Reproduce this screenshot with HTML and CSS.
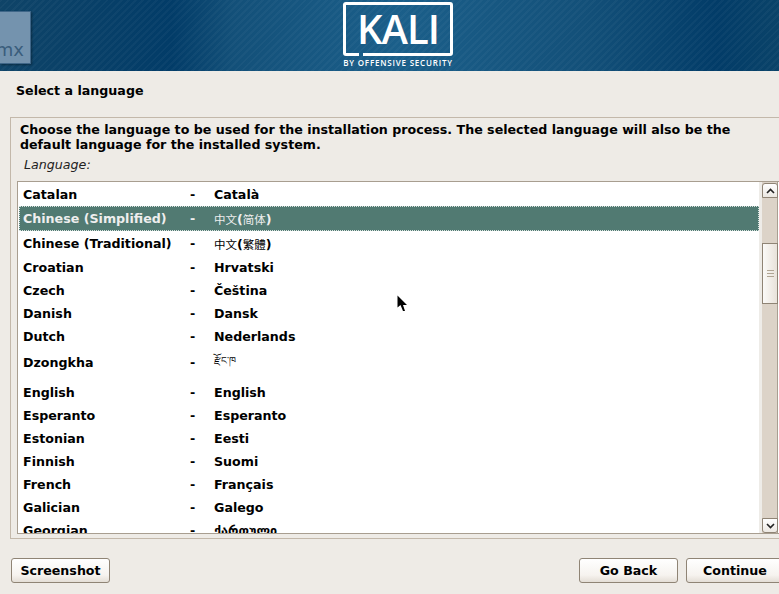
FILE: index.html
```html
<!DOCTYPE html>
<html lang="en">
<head>
<meta charset="utf-8">
<title>Select a language</title>
<link rel="stylesheet" href="styles.css">
</head>
<body>
<header class="banner">
  <div class="tile"><span>mx</span></div>
  <div class="logo">
    <div class="logo-box">KALI</div>
    <div class="logo-sub">BY OFFENSIVE SECURITY</div>
  </div>
</header>
<h1 class="title">Select a language</h1>
<main class="frame">
  <p class="prompt">Choose the language to be used for the installation process. The selected language will also be the default language for the installed system.</p>
  <div class="label">Language:</div>
  <div class="listbox">
    <div class="list">
      <div class="row r-catalan"><span class="c1">Catalan</span><span class="c2">-</span><span class="c3">Català</span></div>
      <div class="row r-sel"><span class="c1">Chinese (Simplified)</span><span class="c2">-</span><span class="c3" lang="zh-CN"><span class="han">中文</span>(<span class="han">简体</span>)</span></div>
      <div class="row r-trad"><span class="c1">Chinese (Traditional)</span><span class="c2">-</span><span class="c3" lang="zh-TW"><span class="han">中文</span>(<span class="han">繁體</span>)</span></div>
      <div class="row"><span class="c1">Croatian</span><span class="c2">-</span><span class="c3">Hrvatski</span></div>
      <div class="row"><span class="c1">Czech</span><span class="c2">-</span><span class="c3">Čeština</span></div>
      <div class="row"><span class="c1">Danish</span><span class="c2">-</span><span class="c3">Dansk</span></div>
      <div class="row"><span class="c1">Dutch</span><span class="c2">-</span><span class="c3">Nederlands</span></div>
      <div class="row r-dz"><span class="c1">Dzongkha</span><span class="c2">-</span><span class="c3 tib">རྫོང་ཁ</span></div>
      <div class="row"><span class="c1">English</span><span class="c2">-</span><span class="c3">English</span></div>
      <div class="row"><span class="c1">Esperanto</span><span class="c2">-</span><span class="c3">Esperanto</span></div>
      <div class="row"><span class="c1">Estonian</span><span class="c2">-</span><span class="c3">Eesti</span></div>
      <div class="row"><span class="c1">Finnish</span><span class="c2">-</span><span class="c3">Suomi</span></div>
      <div class="row"><span class="c1">French</span><span class="c2">-</span><span class="c3">Français</span></div>
      <div class="row"><span class="c1">Galician</span><span class="c2">-</span><span class="c3">Galego</span></div>
      <div class="row"><span class="c1">Georgian</span><span class="c2">-</span><span class="c3">ქართული</span></div>
    </div>
    <div class="scrollbar">
      <div class="arrow">
        <svg width="9" height="6" viewBox="0 0 9 6"><path d="M1 5 4.5 1.5 8 5" fill="none" stroke="#222" stroke-width="1.6"/></svg>
      </div>
      <div class="track">
        <div class="gap-top"></div>
        <div class="thumb"><i></i><i></i><i></i></div>
      </div>
      <div class="arrow arrow-down">
        <svg width="9" height="6" viewBox="0 0 9 6"><path d="M1 1 4.5 4.5 8 1" fill="none" stroke="#222" stroke-width="1.6"/></svg>
      </div>
    </div>
  </div>
</main>
<footer class="actions">
  <button class="btn btn-shot">Screenshot</button>
  <span class="spacer"></span>
  <button class="btn btn-back">Go Back</button>
  <button class="btn btn-next">Continue</button>
</footer>
<svg class="cursor" width="12" height="18" viewBox="0 0 12 18"><path d="M0.5 0.5V12.5L3.5 10 6 16H8L6 10H10Z" fill="#000"/></svg>
</body>
</html>
```
FILE: styles.css
```css
* { box-sizing: border-box; }
html, body { margin: 0; height: 100%; }
body {
  width: 779px;
  height: 594px;
  overflow: hidden;
  position: relative;
  background: #eeebe6;
  color: #000;
  font-family: "DejaVu Sans", sans-serif;
  font-size: 12.65px;
  font-weight: 700;
  display: flex;
  flex-direction: column;
}
.banner {
  height: 71px;
  flex: none;
  position: relative;
  display: flex;
  justify-content: center;
  padding-left: 17px;
  background:
    repeating-linear-gradient(135deg, rgba(255,255,255,.03) 0 2px, rgba(255,255,255,0) 2px 5px),
    linear-gradient(90deg, #0f4468 0, #023c68 22%, #135079 30%, #1b5f8a 51%, #135079 75%, #023c68 92%, #0a4369 100%);
}
.tile {
  position: absolute;
  left: 0;
  top: 11px;
  width: 31px;
  height: 53px;
  background: #7493ae;
  border: 1px solid #3f6688;
  border-left: 0;
  box-shadow: 1px 1px 2px rgba(0,0,0,.35);
  display: flex;
  align-items: flex-end;
  font-weight: 400;
  font-size: 18px;
  color: #3a5d7c;
  padding-bottom: 3px;
  justify-content: flex-end;
  padding-right: 6px;
}
.logo {
  width: 110px;
  margin-top: 2px;
  display: flex;
  flex-direction: column;
  align-items: center;
  color: #fff;
}
.logo-box {
  width: 110px;
  height: 54px;
  border: 3px solid #fff;
  border-radius: 3px;
  font-family: "Open Sans", sans-serif;
  font-weight: 600;
  font-size: 40px;
  line-height: 48px;
  text-align: center;
  letter-spacing: -1px;
  position: relative;
}
.logo-box::after {
  content: "";
  position: absolute;
  left: 13px;
  bottom: -3px;
  width: 4px;
  height: 3px;
  background: #1b5f8a;
}
.logo-sub {
  font-family: "Open Sans", sans-serif;
  font-weight: 600;
  font-size: 8px;
  line-height: 8px;
  letter-spacing: 0.8px;
  white-space: nowrap;
  margin-top: 3px;
}
.title {
  margin: 0;
  font-size: 12.65px;
  font-weight: 700;
  line-height: 16px;
  padding: 12px 0 0 16px;
  height: 46px;
  flex: none;
}
.frame {
  flex: none;
  height: 422px;
  margin-left: 10px;
  margin-right: -2px;
  border: 1px solid #c3b8aa;
  border-right: 0;
  padding: 4px 0 4px 6px;
  display: flex;
  flex-direction: column;
}
.prompt {
  margin: 0;
  padding-left: 3px;
  line-height: 15px;
  width: 740px;
}
.label {
  font-style: italic;
  font-weight: 400;
  line-height: 16px;
  padding: 5px 0 0 7px;
  height: 22px;
  color: #222;
}
.listbox {
  margin-top: 7px;
  flex: 1;
  min-height: 0;
  display: flex;
  background: #fff;
  border: 1px solid #a89e90;
  border-right: 0;
}
.list {
  flex: 1;
  min-width: 0;
  overflow: hidden;
  padding-top: 1px;
}
.row {
  height: 23px;
  display: flex;
  align-items: center;
  margin-left: 1px;
  padding-left: 4px;
}
.r-sel {
  height: 25px;
  background: #517a72;
  color: #eee;
  outline: 1px dotted #d8e2df;
  outline-offset: -1px;
}
.r-trad { height: 25px; }
.r-dz { height: 29px; margin-bottom: 4px; }
.c1 { width: 167px; flex: none; white-space: nowrap; }
.c2 { width: 24px; flex: none; }
.c3 { white-space: nowrap; }
.han { font-family: "Noto Sans CJK SC", sans-serif; font-size: 11.5px; font-weight: 400; }
.tib { font-weight: 400; font-size: 10px; }
.scrollbar {
  width: 19px;
  flex: none;
  margin-right: 3px;
  display: flex;
  flex-direction: column;
  background: #dcd3c8;
  background-clip: padding-box;
  border-right: 1px solid #a89e90;
  border-left: 3px solid #eeece8;
  padding-top: 1px;
}
.arrow {
  height: 15px;
  flex: none;
  background: linear-gradient(#fff, #ece8e2);
  border: 1px solid #8f8475;
  border-radius: 3px 3px 0 0;
  display: flex;
  align-items: center;
  justify-content: center;
  margin: 0 -1px 0 0;
}
.arrow-down { border-radius: 0 0 3px 3px; }
.track { flex: 1; display: flex; flex-direction: column; }
.gap-top { height: 45px; flex: none; }
.thumb {
  height: 61px;
  flex: none;
  margin: 0 -1px 0 0;
  background: linear-gradient(90deg, #fbfaf8, #e8e2da);
  border: 1px solid #8f8475;
  display: flex;
  flex-direction: column;
  gap: 2px;
  align-items: center;
  justify-content: center;
}
.thumb i { display: block; width: 7px; height: 1px; background: #b0a594; }
.actions {
  flex: 1;
  display: flex;
  align-items: flex-start;
  padding: 19px 0 0 11px;
  gap: 8px;
  margin-right: -5px;
}
.spacer { flex: 1; }
.btn {
  height: 25px;
  font: 700 12.65px "DejaVu Sans", sans-serif;
  color: #000;
  background: linear-gradient(#fff, #f6f3ef 70%, #e4ded6);
  border: 1px solid #8f8475;
  border-radius: 3px;
  padding: 0;
}
.btn-shot { width: 99px; }
.btn-back { width: 99px; }
.btn-next { width: 98px; }
.cursor { position: absolute; left: 397px; top: 295px; }
```
